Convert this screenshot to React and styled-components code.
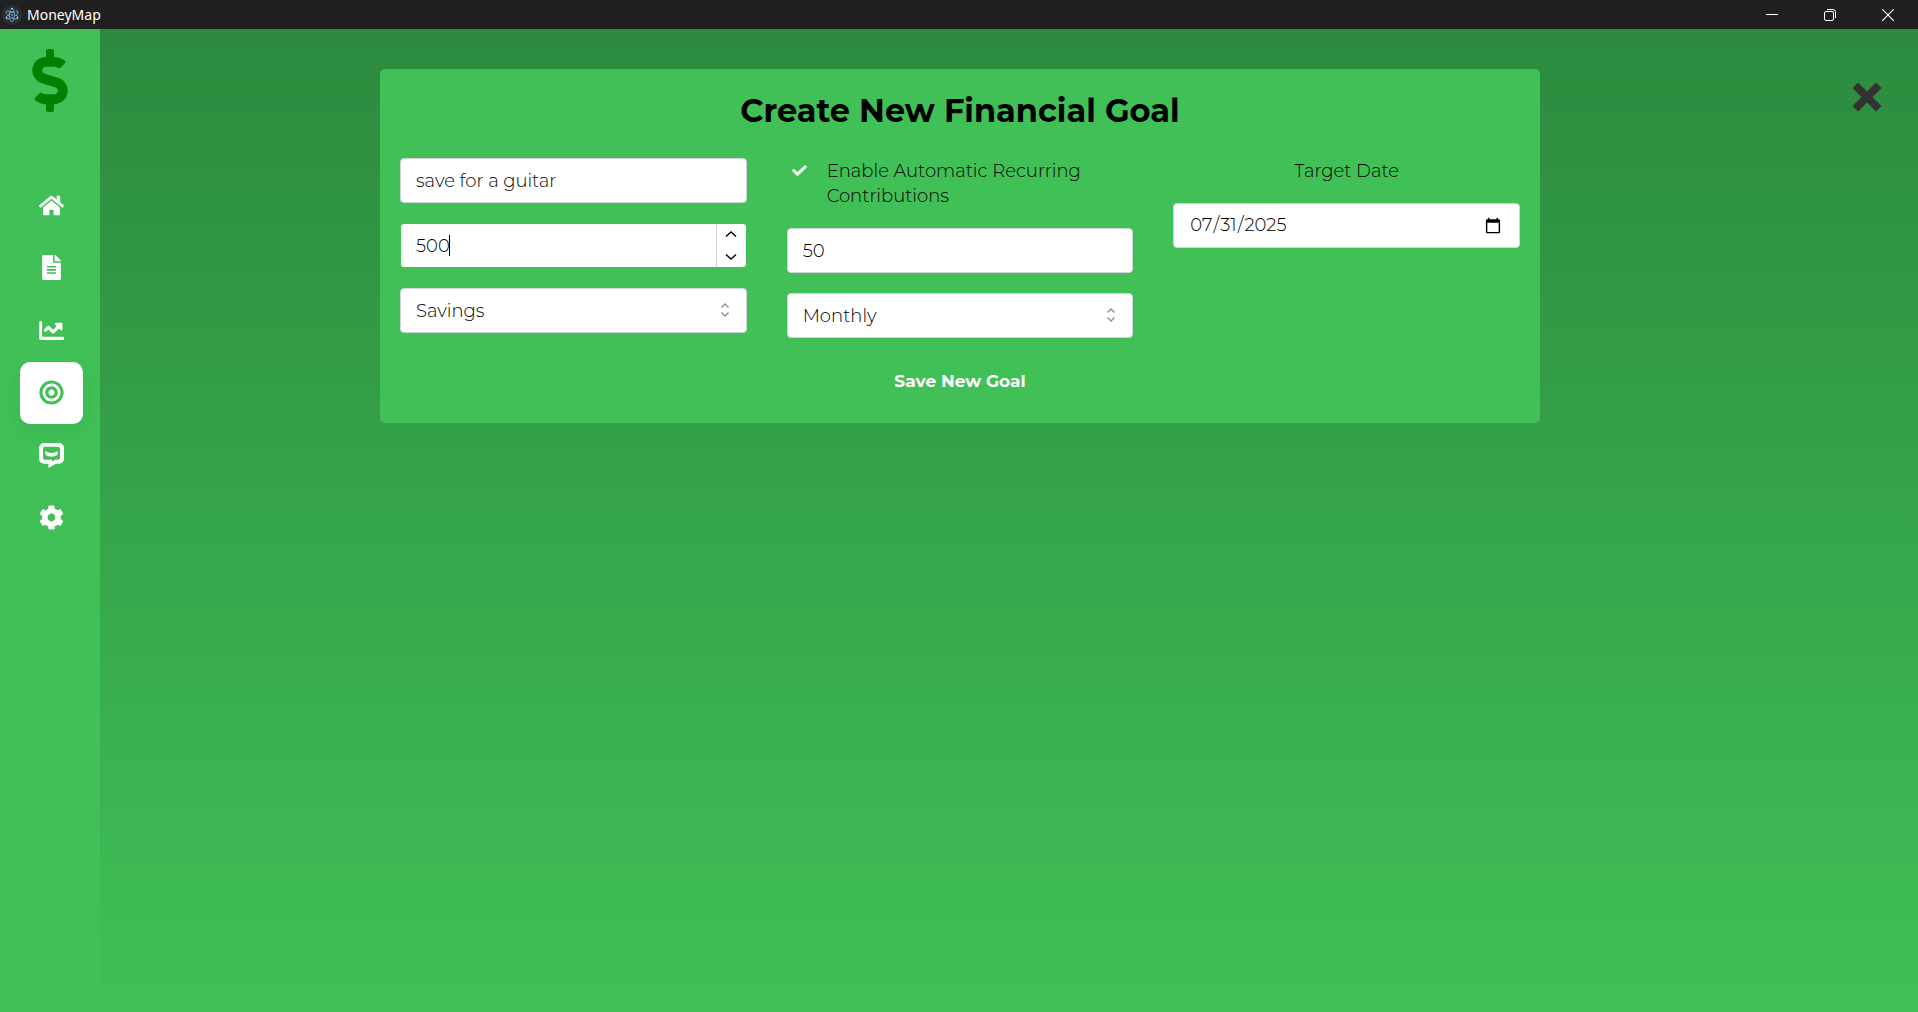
import React, { useState } from "react";
import styled, { createGlobalStyle, css } from "styled-components";
import { FaHome, FaFileAlt, FaChartLine, FaBullseye, FaCog, FaDollarSign } from "react-icons/fa";

const green = "#40c057";

const GlobalStyle = createGlobalStyle`
  *, *::before, *::after { box-sizing: border-box; }
  body {
    margin: 0;
    color: #000;
    font: 300 18px/25px Montserrat, Inter, sans-serif;
  }
`;

const Window = styled.div`
  display: flex;
  flex-direction: column;
  min-height: 100vh;
`;

const TitleBar = styled.header`
  display: flex;
  align-items: center;
  height: 29px;
  padding: 0 1px 0 2px;
  background: #202020;
  color: #fff;
  font: 400 14px/20px "Noto Sans", sans-serif;
`;

const AppName = styled.span`
  flex: 1;
  padding-left: 5px;
`;

const WindowButton = styled.button`
  display: grid;
  place-items: center;
  width: 58px;
  height: 28px;
  padding: 0;
  border: 0;
  background: none;
  color: #fff;
`;

const Body = styled.div`
  display: flex;
  flex: 1;
`;

const Sidebar = styled.aside`
  width: 100px;
  padding: 20px;
  background: ${green};
`;

const Brand = styled.div`
  display: flex;
  justify-content: center;
  color: green;
  font-size: 63px;
`;

const Nav = styled.nav`
  display: grid;
  grid-template-rows: repeat(6, 1fr);
  height: 375px;
  margin-top: 62px;
`;

const NavLink = styled.a`
  display: grid;
  place-items: center;
  width: 63px;
  border-radius: 10px;
  color: #fff;
  font-size: 25px;
  ${(p) => p.$active && css`
    background: #fff;
    color: ${green};
    box-shadow: 0 8px 20px rgba(0, 0, 0, 0.06);
  `}
`;

const Main = styled.main`
  display: grid;
  grid-template-columns: minmax(0, 1fr) 98px;
  flex: 1;
  align-items: start;
  padding-top: 40px;
  background: linear-gradient(#2b8a3e, ${green});
`;

const Panel = styled.form`
  width: 100%;
  max-width: 1160px;
  margin: 0 auto;
  padding: 20px;
  border-radius: 5px;
  background: ${green};
`;

const Title = styled.h1`
  margin: 0 0 25px;
  font-size: 32px;
  font-weight: 700;
  line-height: 44px;
  text-align: center;
`;

const Columns = styled.div`
  display: grid;
  grid-template-columns: repeat(3, minmax(0, 1fr));
  align-items: start;
  gap: 40px;
`;

const Stack = styled.div`
  display: flex;
  flex-direction: column;
  gap: 20px;
`;

const field = css`
  width: 100%;
  height: 45px;
  border: 1px solid #ced4da;
  border-radius: 4px;
  background: #fff;
  color: #000;
  font: inherit;
  outline: none;
`;

const Input = styled.input`
  ${field}
  padding: 0 15px;
  appearance: textfield;
  &::-webkit-inner-spin-button { display: none; }
`;

const DateInput = styled.input`
  ${field}
  padding: 0 15px;
`;

const FocusedField = styled.div`
  ${field}
  display: flex;
  align-items: center;
  overflow: hidden;
  border-color: ${green};
`;

const GrowingInput = styled.input`
  field-sizing: content;
  height: 100%;
  padding: 0 0 0 15px;
  border: 0;
  background: none;
  color: inherit;
  font: inherit;
  outline: none;
  appearance: textfield;
  caret-color: transparent;
  &::-webkit-inner-spin-button { display: none; }
`;

const Caret = styled.span`
  width: 1px;
  height: 21px;
  margin-left: -1px;
  background: #000;
`;

const Steppers = styled.div`
  display: flex;
  flex-direction: column;
  width: 30px;
  height: 100%;
  margin-left: auto;
  border-left: 1px solid #ced4da;
`;

const Stepper = styled.button`
  display: grid;
  flex: 1;
  place-items: center;
  padding: 0;
  border: 0;
  background: none;
  color: #000;
`;

const SelectBox = styled.div`
  position: relative;
  svg {
    position: absolute;
    top: 15px;
    right: 18px;
    color: #868e96;
    pointer-events: none;
  }
`;

const Select = styled.select`
  ${field}
  padding: 2px 15px 0;
  appearance: none;
`;

const CheckLabel = styled.label`
  display: flex;
  align-items: flex-start;
  gap: 20px;
  height: 50px;
  padding-left: 5px;
`;

const CheckText = styled.span`
  padding-top: 1px;
`;

const CheckBox = styled.span`
  position: relative;
  display: grid;
  flex: none;
  place-items: center;
  width: 15px;
  height: 25px;
  color: #fff;
  input {
    position: absolute;
    inset: 0;
    width: 100%;
    height: 100%;
    margin: 0;
    opacity: 0;
  }
  input:not(:checked) + svg { visibility: hidden; }
`;

const DateLabel = styled.label`
  height: 25px;
  padding-top: 1px;
  text-align: center;
`;

const SaveButton = styled.button`
  display: block;
  height: 45px;
  margin: 20px auto 0;
  padding: 1px 20px 0;
  border: 0;
  background: none;
  color: #fff;
  font: inherit;
  font-size: 17px;
  font-weight: 700;
`;

const CloseButton = styled.button`
  display: grid;
  place-items: center;
  justify-self: center;
  width: 56px;
  height: 56px;
  margin-right: 4px;
  padding: 0;
  border: 0;
  background: none;
  color: #333;
`;

const ElectronLogo = () => (
  <svg width="20" height="20" viewBox="0 0 20 20" fill="none" stroke="#9feaf9" strokeWidth="0.8" aria-hidden="true">
    <circle cx="10" cy="10" r="10" fill="#2b2e3a" stroke="none" />
    <g opacity="0.75">
      <ellipse cx="10" cy="10" rx="6.6" ry="2.6" transform="rotate(30 10 10)" strokeDasharray="11 2" />
      <ellipse cx="10" cy="10" rx="6.6" ry="2.6" transform="rotate(90 10 10)" strokeDasharray="11 2" />
      <ellipse cx="10" cy="10" rx="6.6" ry="2.6" transform="rotate(150 10 10)" strokeDasharray="11 2" />
    </g>
    <g fill="#9feaf9" stroke="none">
      <circle cx="10" cy="10" r="0.8" />
      <circle cx="4.600" cy="12.800" r="0.900" />
      <circle cx="15.400" cy="12.800" r="0.900" />
      <circle cx="10" cy="3.600" r="0.900" />
    </g>
  </svg>
);

const ChatIcon = () => (
  <svg width="25" height="25" viewBox="0 0 25 25" fill="currentColor" aria-hidden="true">
    <path fillRule="evenodd" d="M5 0h15A5 5 0 0 1 25 5V15.800a5 5 0 0 1-5 5H17L9.500 25v-4.200H5A5 5 0 0 1 0 15.800V5A5 5 0 0 1 5 0zM5.800 3.800a1.800 1.800 0 0 0-1.800 1.800v9.400a1.800 1.800 0 0 0 1.800 1.800h7.200v1.700l3-1.700h3.200a1.800 1.800 0 0 0 1.800-1.800V5.600a1.800 1.800 0 0 0-1.800-1.800z" />
    <path d="M6.300 8q6.200 4 12.400 0v3.700q-6.200 4.200-12.400 0z" />
  </svg>
);

const Chevron = ({ up }) => (
  <svg width="12" height="8" viewBox="0 0 12 8" fill="none" stroke="currentColor" strokeWidth="1.4" aria-hidden="true">
    <path d={up ? "M1 5.500 6 1l5 4.500" : "M1 2.500 6 7l5-4.500"} />
  </svg>
);

const Selector = () => (
  <svg width="8" height="14" viewBox="0 0 8 14" fill="none" stroke="currentColor" strokeWidth="1.3" aria-hidden="true">
    <path d="M.5 4.5 4 1l3.5 3.5M.5 9.5 4 13l3.5-3.5" />
  </svg>
);

const links = [
  { label: "Home", Icon: FaHome },
  { label: "Transactions", Icon: FaFileAlt },
  { label: "Trends", Icon: FaChartLine },
  { label: "Goals", Icon: FaBullseye, active: true },
  { label: "Chat", Icon: ChatIcon },
  { label: "Settings", Icon: FaCog },
];

export default function App() {
  const [amount, setAmount] = useState(500);

  return (
    <Window>
      <GlobalStyle />
      <TitleBar>
        <ElectronLogo />
        <AppName>MoneyMap</AppName>
        <WindowButton aria-label="Minimize">
          <svg width="12" height="12" viewBox="0 0 12 12" stroke="currentColor"><path d="M0 5.5h12" /></svg>
        </WindowButton>
        <WindowButton aria-label="Restore">
          <svg width="12" height="12" viewBox="0 0 12 12" fill="none" stroke="currentColor">
            <rect x=".5" y="2.5" width="9" height="9" rx="1.5" />
            <path d="M3 .5h6a2.500 2.500 0 0 1 2.500 2.500v6" />
          </svg>
        </WindowButton>
        <WindowButton aria-label="Close window">
          <svg width="12" height="12" viewBox="0 0 12 12" stroke="currentColor" strokeWidth="1.1"><path d="M0 0l12 12M12 0 0 12" /></svg>
        </WindowButton>
      </TitleBar>
      <Body>
        <Sidebar>
          <Brand><FaDollarSign /></Brand>
          <Nav>
            {links.map(({ label, Icon, active }) => (
              <NavLink key={label} href="#" aria-label={label} $active={active}><Icon /></NavLink>
            ))}
          </Nav>
        </Sidebar>
        <Main>
          <Panel onSubmit={(e) => e.preventDefault()}>
            <Title>Create New Financial Goal</Title>
            <Columns>
              <Stack>
                <Input aria-label="Goal name" defaultValue="save for a guitar" />
                <FocusedField>
                  <GrowingInput type="number" aria-label="Goal amount" value={amount} onChange={(e) => setAmount(e.target.value)} />
                  <Caret />
                  <Steppers>
                    <Stepper type="button" aria-label="Increase" onClick={() => setAmount(Number(amount) + 1)}><Chevron up /></Stepper>
                    <Stepper type="button" aria-label="Decrease" onClick={() => setAmount(Number(amount) - 1)}><Chevron /></Stepper>
                  </Steppers>
                </FocusedField>
                <SelectBox>
                  <Select aria-label="Goal type"><option>Savings</option></Select>
                  <Selector />
                </SelectBox>
              </Stack>
              <Stack>
                <CheckLabel>
                  <CheckBox>
                    <input type="checkbox" defaultChecked />
                    <svg width="15" height="11" viewBox="0 0 15 11" fill="none" stroke="currentColor" strokeWidth="3" strokeLinecap="round" strokeLinejoin="round" aria-hidden="true">
                      <path d="M1.800 5.500 5.500 9.200 13.200 1.800" />
                    </svg>
                  </CheckBox>
                  <CheckText>Enable Automatic Recurring Contributions</CheckText>
                </CheckLabel>
                <Input type="number" aria-label="Contribution amount" defaultValue="50" />
                <SelectBox>
                  <Select aria-label="Contribution frequency"><option>Monthly</option></Select>
                  <Selector />
                </SelectBox>
              </Stack>
              <Stack>
                <DateLabel htmlFor="target-date">Target Date</DateLabel>
                <DateInput id="target-date" type="date" defaultValue="2025-07-31" />
              </Stack>
            </Columns>
            <SaveButton type="submit">Save New Goal</SaveButton>
          </Panel>
          <CloseButton type="button" aria-label="Close">
            <svg width="30" height="30" viewBox="0 0 30 30" fill="currentColor" aria-hidden="true">
              <path d="M6 .5 15 9.500 24 .5 29.500 6 20.500 15 29.500 24 24 29.500 15 20.500 6 29.500 .5 24 9.500 15 .5 6z" />
            </svg>
          </CloseButton>
        </Main>
      </Body>
    </Window>
  );
}
